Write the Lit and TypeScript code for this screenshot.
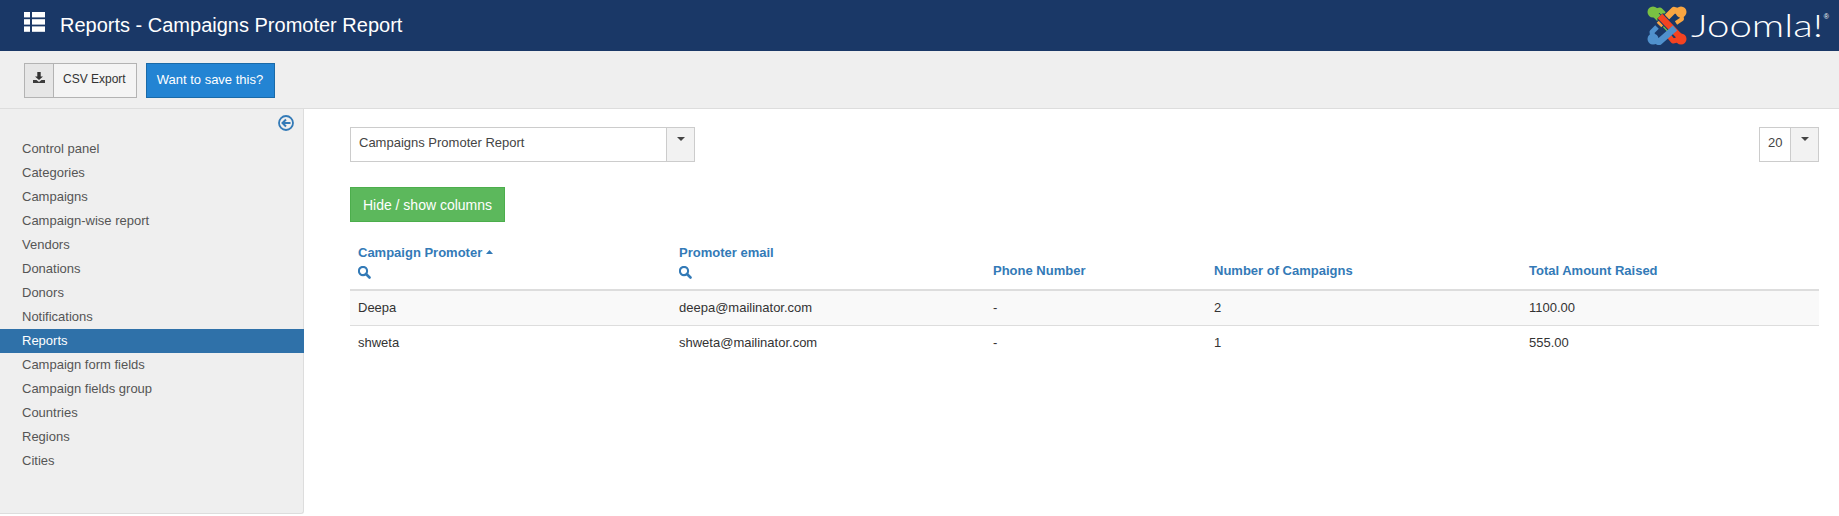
import { LitElement, html, css, svg } from "lit";
import { customElement } from "lit/decorators.js";

const NAV = ["Control panel","Categories","Campaigns","Campaign-wise report","Vendors","Donations","Donors","Notifications","Reports","Campaign form fields","Campaign fields group","Countries","Regions","Cities"];
const searchIcon = html`<svg class="search" viewBox="0 0 13 13" width="13" height="13"><circle cx="5" cy="5" r="4.100" fill="none" stroke="currentColor" stroke-width="2.100"/><path d="M8 8 11.500 11.500" stroke="currentColor" stroke-width="2.600" stroke-linecap="round"/></svg>`;
const caret = html`<svg class="caret" viewBox="0 0 7 4" width="7" height="4"><path d="M0 4 3.500 0 7 4z" fill="#337ab7"/></svg>`;

@customElement("app-root")
export class AppRoot extends LitElement {
  static styles = css`
    :host { display: block; font-family: "Liberation Sans", Arial, sans-serif; font-size: 13px; color: #333; background: #fff; height: 516px; overflow: hidden; }
    .header { height: 51px; background: #1a3867; display: flex; align-items: center; color: #fff; padding-left: 24px; box-sizing: border-box; }
    .header .menu { flex: none; margin-top: -7px; }
    .header h1 { font-size: 20px; font-weight: 400; margin: 0 0 1px 15px; flex: 1; line-height: 24px; }
    .logo { display: flex; align-items: center; margin-right: 17px; margin-top: -1px; }
    .wordmark { display: block; width: 131px; height: 40px; font-family: "Lato", "Open Sans", sans-serif; font-weight: 300; font-size: 31px; line-height: 41px; color: #fff; margin-left: 4px; position: relative; }
    .wordmark .wm { display: inline-block; transform: scaleX(1.3); transform-origin: 0 50%; }
    .wordmark sup { position: absolute; right: -7px; top: 8px; font-family: "Liberation Sans", sans-serif; font-size: 7px; line-height: 8px; font-weight: 400; }
    .toolbar { height: 58px; box-sizing: border-box; background: #efefef; border-bottom: 1px solid #ddd; padding: 12px 24px 0; display: flex; gap: 9px; align-items: flex-start; }
    .btn-export { display: flex; height: 35px; box-sizing: border-box; border: 1px solid #b3b3b3; background: #f4f4f4; font-size: 12px; color: #333; }
    .btn-export .ic { width: 29px; background: #e6e6e6; border-right: 1px solid #b3b3b3; display: flex; justify-content: center; padding-top: 8px; box-sizing: border-box; }
    .btn-export .lb { padding: 0 10px 0 9px; line-height: 31px; }
    .btn-save { height: 35px; box-sizing: border-box; border: 1px solid #1a6aa8; background: #2384d3; color: #fff; font-size: 13px; padding: 0 11px 0 10px; line-height: 31px; }
    .body { display: flex; align-items: flex-start; }
    .side { width: 304px; height: 405px; box-sizing: border-box; flex: none; background: #efefef; border-right: 1px solid #ddd; border-bottom: 1px solid #ddd; border-bottom-right-radius: 3px; padding-top: 6px; }
    .collapse { display: flex; justify-content: flex-end; padding-right: 9px; height: 22px; color: #337ab7; }
    .nav { list-style: none; margin: 0; padding: 0; }
    .nav li { height: 24px; line-height: 24px; padding-left: 22px; color: #555; margin-right: -1px; }
    .nav li.active { background: #2f71a9; color: #fff; }
    .main { flex: 1; padding: 18px 20px 0 46px; min-width: 0; }
    .filters { display: flex; justify-content: space-between; }
    .sel { display: flex; height: 35px; box-sizing: border-box; border: 1px solid #ccc; color: #444; background: #fff; }
    .sel .val { padding: 0 8px; line-height: 29px; }
    .sel.report .val { width: 315px; box-sizing: border-box; }
    .sel.num .val { width: 30px; box-sizing: border-box; padding: 0 8px; }
    .sel .arrow { width: 28px; background: #f2f2f2; border-left: 1px solid #ccc; box-sizing: border-box; display: flex; justify-content: center; padding-top: 9px; }
    .tri { width: 0; height: 0; border-left: 4px solid transparent; border-right: 4px solid transparent; border-top: 4px solid #444; }
    .btn-cols { display: block; width: 155px; height: 35px; box-sizing: border-box; margin-top: 25px; background: #5cb85c; border: 1px solid #4cae4c; color: #fff; font-size: 14px; line-height: 34px; text-align: center; }
    table { width: 1469px; border-collapse: collapse; table-layout: fixed; margin-top: 22px; }
    th { text-align: left; vertical-align: bottom; padding: 0 8px 10px; color: #337ab7; font-size: 13px; font-weight: 700; border-bottom: 2px solid #ddd; line-height: 18px; }
    th.plain { padding-bottom: 9px; }
    th .lnk { display: block; }
    .search { display: block; margin-top: 4px; }
    .caret { margin: 0 0 3px 0; vertical-align: middle; }
    td { height: 34px; padding: 0 8px; border-bottom: 1px solid #ddd; color: #333; line-height: 18px; }
    tr.odd td { background: #f9f9f9; }
    tr.last td { border-bottom: 0; }
  `;

  private logo() {
    return svg`<svg width="40" height="40" viewBox="0 0 40 40">
      <g fill="none" stroke-linejoin="round">
        <path d="M6 7 L26 28" stroke="#7ac143" stroke-width="6.500"/>
        <path d="M6 7 L13 5 L19 11" stroke="#7ac143" stroke-width="5"/>
        <circle cx="6" cy="7" r="5.500" fill="#7ac143"/>
        <path d="M34 7 L27 5 L12 20" stroke="#1a3867" stroke-width="8.500"/>
        <path d="M34 7 L27 5 L12 20" stroke="#f9a541" stroke-width="6.500"/>
        <path d="M34 7 L35 14 L29 18" stroke="#f9a541" stroke-width="4"/>
        <circle cx="34" cy="7" r="5.500" fill="#f9a541"/>
        <path d="M13 11 L34 33" stroke="#1a3867" stroke-width="8.500"/>
        <path d="M13 11 L34 33" stroke="#f44321" stroke-width="6.500"/>
        <path d="M34 34 L26 36 L21 30" stroke="#f44321" stroke-width="5"/>
        <circle cx="34" cy="34" r="5.500" fill="#f44321"/>
        <path d="M28 23 L12 37 L6 34" stroke="#5091cd" stroke-width="6.500"/>
        <path d="M6 34 L5 27 L10 22" stroke="#5091cd" stroke-width="5"/>
        <circle cx="6" cy="34" r="5.500" fill="#5091cd"/>
      </g>
    </svg>`;
  }

  render() {
    const rows = [
      ["Deepa","deepa@mailinator.com","-","2","1100.00"],
      ["shweta","shweta@mailinator.com","-","1","555.00"],
    ];
    return html`
      <div class="header">
        <svg class="menu" width="21" height="20" viewBox="0 0 21 20" fill="#fff">
          <rect x="0" y="0" width="6" height="5.400"/><rect x="8" y="0" width="13" height="5.400"/>
          <rect x="0" y="7.200" width="6" height="5.400"/><rect x="8" y="7.200" width="13" height="5.400"/>
          <rect x="0" y="14.400" width="6" height="5.400"/><rect x="8" y="14.400" width="13" height="5.400"/>
        </svg>
        <h1>Reports - Campaigns Promoter Report</h1>
        <div class="logo">${this.logo()}<span class="wordmark"><span class="wm">Joomla!</span><sup>®</sup></span></div>
      </div>
      <div class="toolbar">
        <div class="btn-export">
          <span class="ic"><svg width="12" height="11" viewBox="0 0 12 11" fill="#333"><path d="M4.300 0h3.400v4.500h2.300L6 8 2 4.500h2.300z"/><path d="M0 8h3.500L6 10 8.500 8H12v3H0z" opacity="0.95"/></svg></span>
          <span class="lb">CSV Export</span>
        </div>
        <div class="btn-save">Want to save this?</div>
      </div>
      <div class="body">
        <aside class="side">
          <div class="collapse">
            <svg width="16" height="16" viewBox="0 0 16 16" fill="none" stroke="currentColor"><circle cx="8" cy="8" r="7" stroke-width="1.800"/><path d="M12.500 8H4.500M8 4.500 4.500 8 8 11.500" stroke-width="2"/></svg>
          </div>
          <ul class="nav">
            ${NAV.map((n) => html`<li class=${n === "Reports" ? "active" : ""}>${n}</li>`)}
          </ul>
        </aside>
        <main class="main">
          <div class="filters">
            <div class="sel report"><span class="val">Campaigns Promoter Report</span><span class="arrow"><span class="tri"></span></span></div>
            <div class="sel num"><span class="val">20</span><span class="arrow"><span class="tri"></span></span></div>
          </div>
          <div class="btn-cols">Hide / show columns</div>
          <table>
            <colgroup><col style="width:321px"/><col style="width:314px"/><col style="width:221px"/><col style="width:315px"/><col style="width:298px"/></colgroup>
            <thead><tr>
              <th><span class="lnk">Campaign Promoter ${caret}</span>${searchIcon}</th>
              <th><span class="lnk">Promoter email</span>${searchIcon}</th>
              <th class="plain">Phone Number</th>
              <th class="plain">Number of Campaigns</th>
              <th class="plain">Total Amount Raised</th>
            </tr></thead>
            <tbody>
              ${rows.map((r, i) => html`<tr class="${i === 0 ? "odd" : "last"}">${r.map((c) => html`<td>${c}</td>`)}</tr>`)}
            </tbody>
          </table>
        </main>
      </div>
    `;
  }
}
